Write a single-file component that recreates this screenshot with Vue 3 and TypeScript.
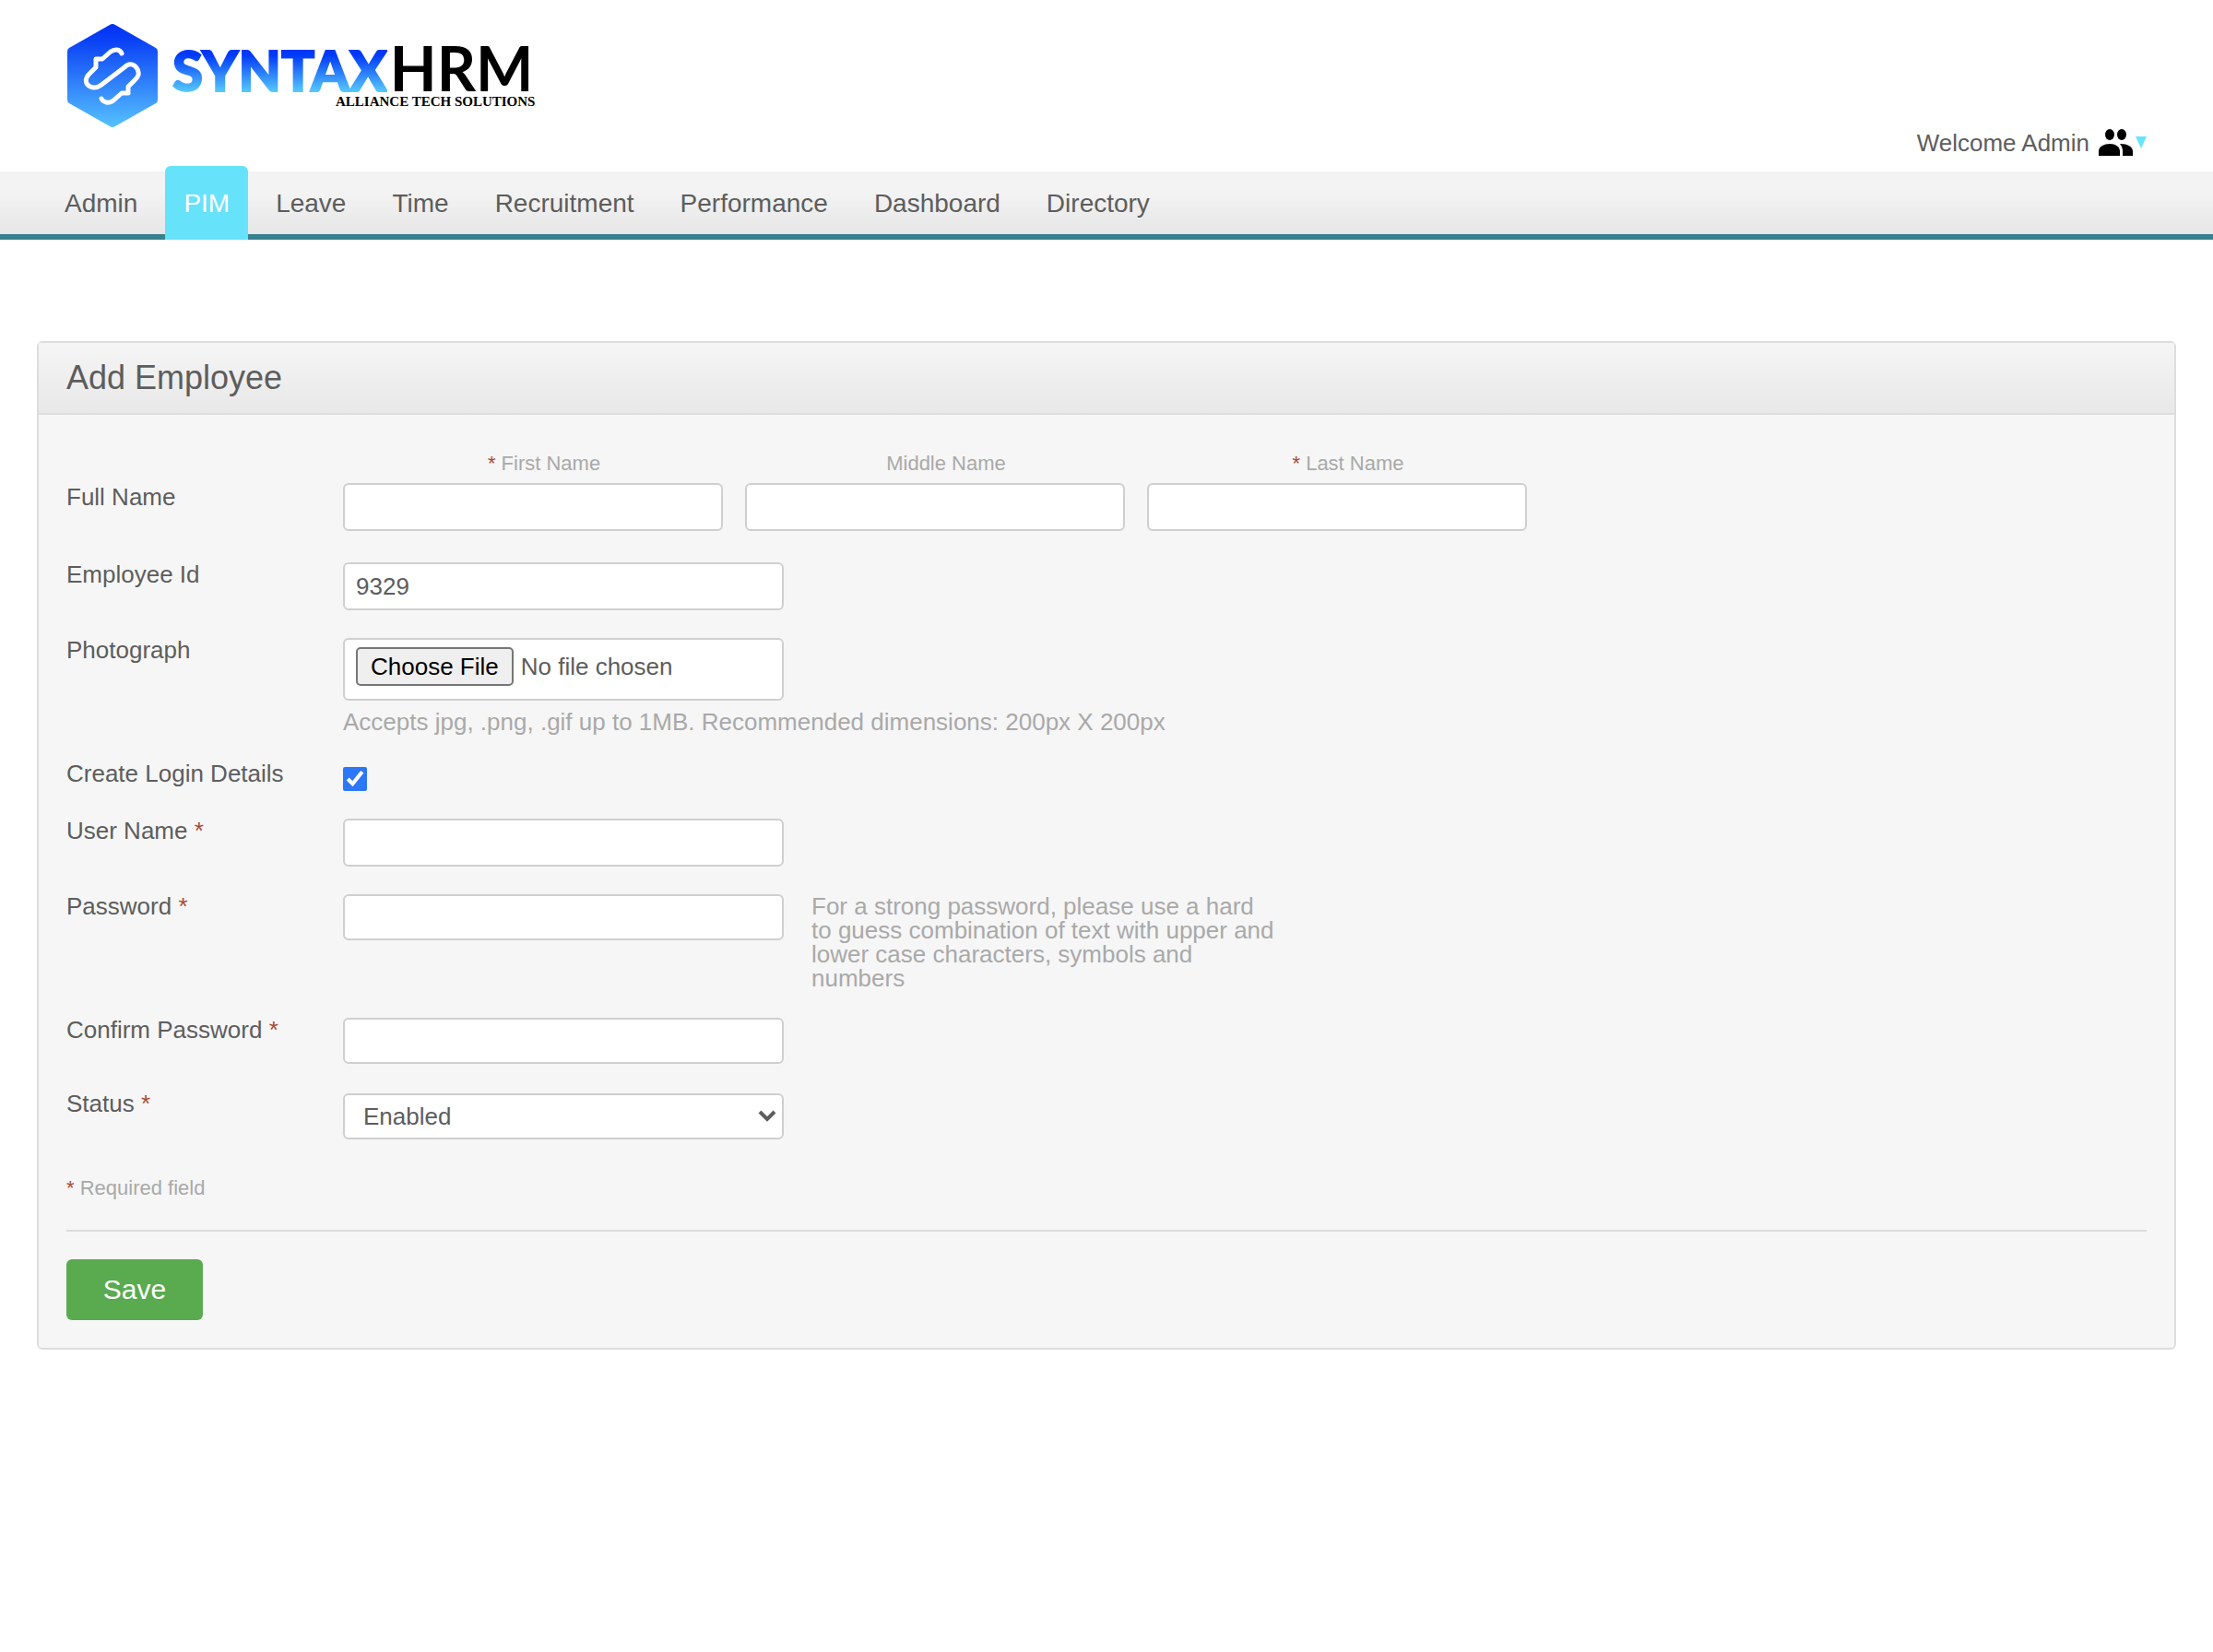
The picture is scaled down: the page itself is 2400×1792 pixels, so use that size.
<script setup lang="ts">
import { ref } from 'vue'

interface NameField {
  id: string
  label: string
  required: boolean
}

const menu: string[] = ['Admin', 'PIM', 'Leave', 'Time', 'Recruitment', 'Performance', 'Dashboard', 'Directory']
const active = ref('PIM')

const nameFields: NameField[] = [
  { id: 'firstName', label: 'First Name', required: true },
  { id: 'middleName', label: 'Middle Name', required: false },
  { id: 'lastName', label: 'Last Name', required: true },
]
const names = ref<Record<string, string>>({ firstName: '', middleName: '', lastName: '' })
const employeeId = ref('9329')
const createLogin = ref(true)
const userName = ref('')
const password = ref('')
const confirmPassword = ref('')
const status = ref('Enabled')
</script>

<template>
  <div class="page">
    <header class="top">
      <a class="brand" href="#">
        <svg class="mark" viewBox="0 0 98 112" aria-hidden="true">
          <defs>
            <linearGradient id="hex" x1="0" y1="0" x2="0" y2="1">
              <stop offset="0" stop-color="#0030f5" />
              <stop offset="0.15" stop-color="#0a40f5" />
              <stop offset="1" stop-color="#56c2ff" />
            </linearGradient>
          </defs>
          <path d="M46 1Q49 -1 52 1L96 26Q98 27 98 30V82Q98 85 96 86L52 111Q49 113 46 111L2 86Q0 85 0 82V30Q0 27 2 26Z" fill="url(#hex)" />
          <path
            d="M59 32C57 27 51 27 47 30L38 38H31V47L24 54C18 60 20 66 25 68C29 70 33 69 37 66L62 47C67 42 73 43 76 49C79 55 76 58 73 61L66 68V75H59L50 83C45 87 39 85 37 81"
            fill="none" stroke="#fff" stroke-width="5" stroke-linecap="round" stroke-linejoin="round"
          />
        </svg>
        <span class="wordmark">
          <span class="name"><span class="syntax">SYNTAX</span><span class="hrm">HRM</span></span>
          <span class="tagline">ALLIANCE TECH SOLUTIONS</span>
        </span>
      </a>
      <a class="user" href="#">
        <span class="welcome">Welcome Admin</span>
        <svg class="people" viewBox="0 0 37 30" aria-hidden="true">
          <ellipse cx="12" cy="7" rx="5" ry="6" />
          <ellipse cx="25" cy="7" rx="5" ry="6" />
          <path d="M0 30V25C0 20 6 17 12 17S23 20 23 25V30Z" />
          <path d="M24 17C31 17 37 20 37 25V30H26V25C26 22 25 19 23 17Z" />
        </svg>
        <svg class="caret" viewBox="0 0 12 13" aria-hidden="true"><path d="M0 0H12L6 13Z" /></svg>
      </a>
    </header>

    <nav class="menu">
      <a
        v-for="item in menu" :key="item" href="#" class="menu-item"
        :class="{ active: item === active }" @click.prevent="active = item"
      >{{ item }}</a>
    </nav>

    <main class="panel">
      <h1 class="panel-head">Add Employee</h1>
      <form class="panel-body" @submit.prevent>
        <div class="row names">
          <span class="label">Full Name</span>
          <div class="name-list">
            <div v-for="f in nameFields" :key="f.id" class="name-field">
              <label :for="f.id"><em v-if="f.required">*</em> {{ f.label }}</label>
              <input :id="f.id" v-model="names[f.id]" class="box" type="text">
            </div>
          </div>
        </div>
        <div class="row">
          <label class="label" for="employeeId">Employee Id</label>
          <input id="employeeId" v-model="employeeId" class="box" type="text">
        </div>
        <div class="row">
          <label class="label" for="photo">Photograph</label>
          <div class="stack">
            <input id="photo" class="box file" type="file">
            <span class="hint">Accepts jpg, .png, .gif up to 1MB. Recommended dimensions: 200px X 200px</span>
          </div>
        </div>
        <div class="row">
          <label class="label" for="login">Create Login Details</label>
          <input id="login" v-model="createLogin" class="check" type="checkbox">
        </div>
        <div class="row">
          <label class="label" for="userName">User Name <em>*</em></label>
          <input id="userName" v-model="userName" class="box" type="text">
        </div>
        <div class="row">
          <label class="label" for="password">Password <em>*</em></label>
          <input id="password" v-model="password" class="box short" type="password">
          <span class="hint advice">For a strong password, please use a hard to guess combination of text with upper and lower case characters, symbols and numbers</span>
        </div>
        <div class="row">
          <label class="label" for="confirm">Confirm Password <em>*</em></label>
          <input id="confirm" v-model="confirmPassword" class="box short" type="password">
        </div>
        <div class="row">
          <label class="label" for="status">Status <em>*</em></label>
          <div class="select">
            <select id="status" v-model="status" class="box short">
              <option>Enabled</option>
              <option>Disabled</option>
            </select>
            <svg class="chevron" viewBox="0 0 20 13" aria-hidden="true"><path d="M2 2L10 10L18 2" /></svg>
          </div>
        </div>
        <p class="required"><em>*</em> Required field</p>
        <div class="actions">
          <button class="save" type="submit">Save</button>
        </div>
      </form>
    </main>
  </div>
</template>

<style>
body {
  background: #fff;
}
</style>

<style scoped>
.page {
  font: 26px/26px "Liberation Sans", Arial, sans-serif;
  color: #5d5d5d;
}
.page * {
  box-sizing: border-box;
}
a {
  color: inherit;
  text-decoration: none;
}
em {
  color: #aa4935;
  font-style: normal;
}
.top {
  display: flex;
  justify-content: space-between;
  padding: 26px 72px 17px 73px;
}
.brand {
  display: flex;
  gap: 16px;
  height: 112px;
  margin-bottom: 31px;
}
.mark {
  width: 98px;
  height: 112px;
}
.wordmark {
  display: flex;
  flex-direction: column;
  align-items: flex-end;
  padding-top: 19px;
  color: #000;
}
.name {
  display: flex;
  align-items: baseline;
  gap: 3px;
  height: 57px;
  padding-right: 2px;
  font: 700 66px/57px Lato, sans-serif;
}
.syntax {
  font-size: 60px;
  font-weight: 900;
  background: linear-gradient(#0038f8 20%, #56c8fc 90%);
  background-clip: text;
  color: transparent;
  -webkit-text-stroke: 2px transparent;
}
.tagline {
  font: 700 15px/16px "Liberation Serif", serif;
}
.user {
  display: flex;
  align-items: flex-end;
  align-self: flex-end;
  height: 30px;
}
.welcome {
  padding-bottom: 1px;
}
.people {
  width: 37px;
  height: 30px;
  margin-left: 10px;
}
.caret {
  width: 12px;
  height: 13px;
  margin: 0 0 8px 3px;
  fill: #66e4fb;
}
.menu {
  display: flex;
  gap: 10px;
  height: 74px;
  padding: 0 50px;
  background: linear-gradient(#f3f3f3 35%, #e6e6e6);
  border-bottom: 6px solid #37808e;
}
.menu-item {
  padding: 0 20px;
  font-size: 28px;
  line-height: 70px;
}
.active {
  margin: -6px 0;
  padding-top: 6px;
  color: #fff;
  background: #66e2fa;
  border-radius: 6px 6px 0 0;
}
.panel {
  margin: 110px 40px 0;
  background: #f6f6f6;
  border: 2px solid #ddd;
  border-radius: 6px;
}
.panel-head {
  margin: 0;
  padding: 0 30px;
  font-size: 36px;
  font-weight: 400;
  line-height: 76px;
  background: linear-gradient(#f5f5f5, #e8e8e8);
  border-bottom: 2px solid #ddd;
}
.panel-body {
  display: flex;
  flex-direction: column;
  gap: 30px;
  padding: 42px 30px 30px;
}
.row {
  display: flex;
  align-items: flex-start;
}
.label {
  flex: none;
  width: 300px;
}
.names {
  padding-bottom: 4px;
}
.names .label {
  padding-top: 34px;
}
.name-list {
  display: flex;
}
.name-field {
  display: flex;
  flex-direction: column;
  gap: 10px;
  width: 436px;
}
.name-field label {
  font-size: 22px;
  line-height: 22px;
  text-align: center;
  color: #a9a9a9;
}
.box {
  width: 478px;
  height: 52px;
  padding: 0 12px;
  font: inherit;
  color: #5d5d5d;
  background: #fff;
  border: 2px solid #cfcfcf;
  border-radius: 6px;
}
.short {
  height: 50px;
}
.name-field .box {
  width: 412px;
}
.stack {
  display: flex;
  flex-direction: column;
  gap: 10px;
}
.file {
  height: 68px;
  padding-top: 8px;
}
.file::file-selector-button {
  height: 42px;
  margin: 0 8px 0 0;
  padding: 0 14px;
  font: inherit;
  color: #000;
  background: #efefef;
  border: 2px solid #767676;
  border-radius: 5px;
}
.hint {
  color: #a9a9a9;
}
.advice {
  width: 506px;
  margin-left: 30px;
}
.check {
  width: 26px;
  height: 26px;
  margin: 6px 0 0;
  accent-color: #2b77f8;
}
.select {
  position: relative;
  margin-top: 2px;
}
.select .box {
  display: block;
  padding: 0 22px 0 20px;
  appearance: none;
}
.chevron {
  position: absolute;
  top: 18px;
  right: 8px;
  width: 20px;
  height: 13px;
  fill: none;
  stroke: #5d5d5d;
  stroke-width: 4;
  pointer-events: none;
}
.required {
  margin: 12px 0 4px;
  font-size: 22px;
  line-height: 22px;
  color: #a9a9a9;
}
.actions {
  padding-top: 30px;
  border-top: 2px solid #ddd;
}
.save {
  display: block;
  width: 148px;
  height: 66px;
  padding: 0;
  font: inherit;
  font-size: 30px;
  color: #fff;
  background: #5aaa50;
  border: 0;
  border-radius: 6px;
}
</style>
